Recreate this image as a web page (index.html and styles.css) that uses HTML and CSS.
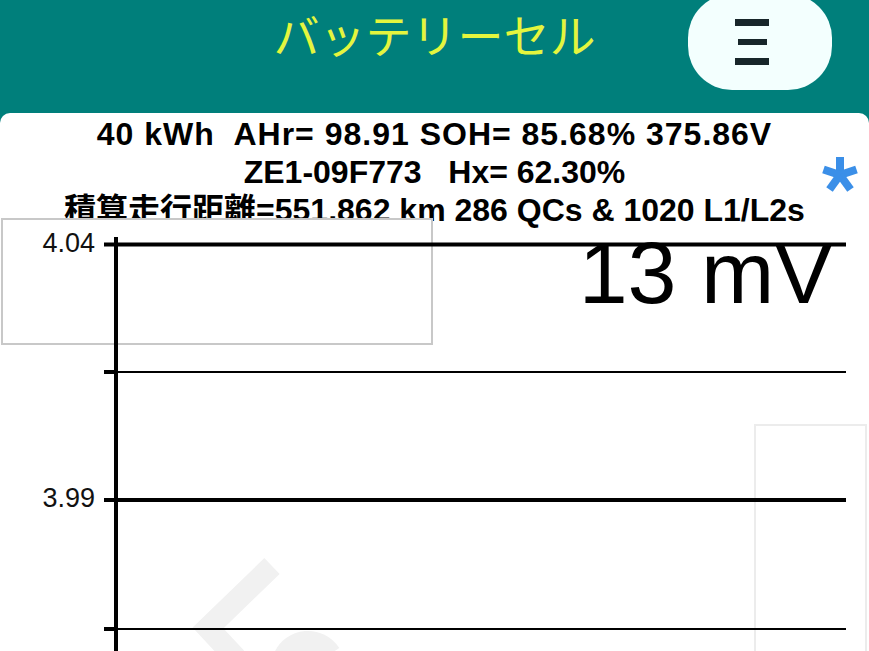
FILE: index.html
```html
<!DOCTYPE html>
<html lang="ja">
  <head>
    <meta charset="UTF-8" />
    <meta name="viewport" content="width=device-width, initial-scale=1.0" />
    <title>バッテリーセル</title>
    <link rel="stylesheet" href="styles.css">
  </head>

  <body>
    <header class="topbar">
      <h1 class="title">バッテリーセル</h1>
      <button class="menu-btn" aria-label="menu">
        <svg width="34" height="46" viewBox="0 0 34 46">
          <rect x="0" y="0" width="34" height="7" />
          <rect x="3" y="20" width="29" height="6" />
          <rect x="0" y="39" width="34" height="7" />
        </svg>
      </button>
    </header>

    <main class="panel">
      <div class="summary">
        <div class="line line-1">40 kWh  AHr= 98.91 SOH= 85.68% 375.86V</div>
        <div class="line">ZE1-09F773   Hx= 62.30%</div>
        <div class="line">積算走行距離=551,862 km 286 QCs &amp; 1020 L1/L2s</div>
      </div>

      <svg class="flag" width="36" height="38" viewBox="0 0 36 38">
        <g stroke="#3b8fe8" stroke-width="8">
          <line x1="18" y1="20" x2="18" y2="2" />
          <line x1="18" y1="20" x2="34.5" y2="14.5" />
          <line x1="18" y1="20" x2="28.5" y2="34.5" />
          <line x1="18" y1="20" x2="7.5" y2="34.5" />
          <line x1="18" y1="20" x2="1.5" y2="14.5" />
        </g>
      </svg>

      <div class="chart">
        <svg width="869" height="440" viewBox="0 0 869 440">
          <!-- faded logo behind the plot -->
          <g fill="none" stroke="#f1f1f1" stroke-width="22">
            <polyline points="272,348 208,410 236,440" />
            <path d="M284 440 A 26 26 0 0 1 330 436" />
          </g>

          <!-- legend box -->
          <rect x="2" y="1" width="430" height="125" fill="#fff" stroke="#c8c8c8" stroke-width="2" />
          <!-- second cell column -->
          <rect x="755" y="207" width="111" height="240" fill="none" stroke="#ececec" stroke-width="2" />

          <g stroke="#000">
            <line x1="104" y1="26.5" x2="846" y2="26.5" stroke-width="4" />
            <line x1="118" y1="154" x2="846" y2="154" stroke-width="2" />
            <line x1="104" y1="154" x2="118" y2="154" stroke-width="4" />
            <line x1="104" y1="282" x2="846" y2="282" stroke-width="4" />
            <line x1="118" y1="411" x2="846" y2="411" stroke-width="2" />
            <line x1="104" y1="411" x2="118" y2="411" stroke-width="4" />
            <line x1="116" y1="19" x2="116" y2="440" stroke-width="4" />
          </g>

          <text class="tick" x="95" y="33.5">4.04</text>
          <text class="tick" x="95" y="289">3.99</text>
          <text class="spread" x="833" y="85">13 mV</text>
        </svg>
      </div>
    </main>
  </body>
</html>
```

FILE: styles.css
```css
* {
  box-sizing: border-box;
}

html,
body {
  margin: 0;
  height: 100%;
  overflow: hidden;
}

body {
  background: #007f7b;
  font-family: "Liberation Sans", "Noto Sans CJK JP", sans-serif;
}

.topbar {
  position: relative;
  height: 113px;
  display: flex;
  justify-content: center;
  padding-top: 10px;
}

.title {
  margin: 0;
  font-family: "Noto Sans CJK JP", sans-serif;
  font-weight: 400;
  font-size: 46px;
  line-height: 46px;
  color: #e4f53e;
}

.menu-btn {
  position: absolute;
  top: -6px;
  right: 37px;
  width: 144px;
  height: 96px;
  border: 0;
  border-radius: 44px;
  background: #f3fffe;
  padding: 0 0 0 47px;
  display: flex;
  align-items: center;
}

.menu-btn svg {
  fill: #17262a;
  display: block;
}

.panel {
  position: relative;
  height: calc(100% - 113px);
  background: #fff;
  border-radius: 10px 10px 0 0;
  overflow: hidden;
}

.summary {
  padding-top: 2px;
  text-align: center;
  font-weight: 700;
  font-size: 32px;
  line-height: 38px;
  color: #000;
}

.line {
  white-space: pre;
}

.line-1 {
  letter-spacing: 1px;
}

.flag {
  position: absolute;
  top: 42px;
  right: 11px;
}

.chart {
  position: relative;
  margin-top: -11px;
}

.chart svg {
  display: block;
}

.tick {
  font-size: 27px;
  fill: #111;
  text-anchor: end;
}

.spread {
  font-size: 88px;
  fill: #000;
  text-anchor: end;
}
```
